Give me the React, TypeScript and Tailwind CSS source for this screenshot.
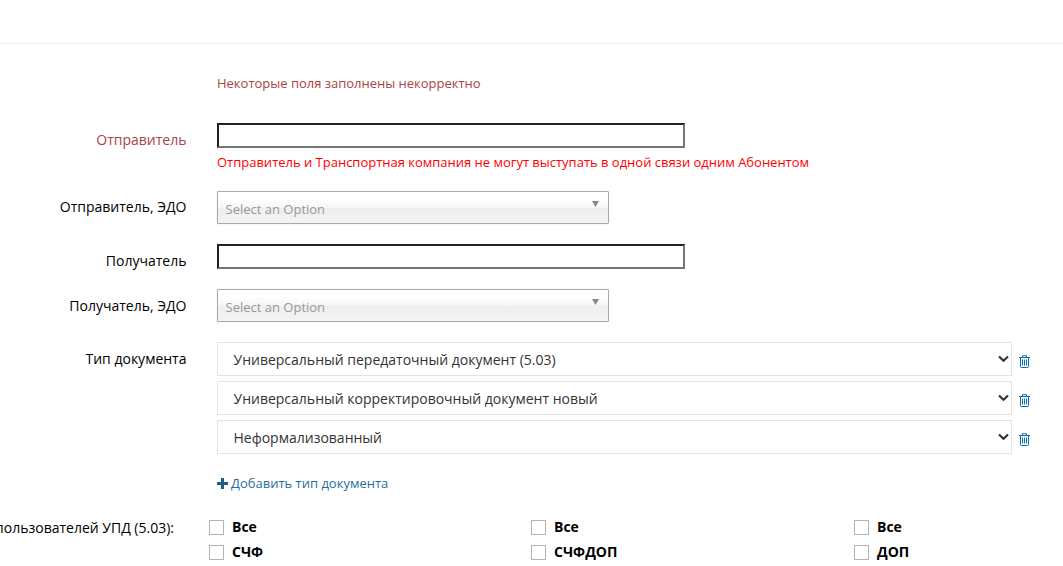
import React from "react";

const font = { fontFamily: '"Open Sans", "Noto Sans", sans-serif' };

function Label({ children, red }: { children: React.ReactNode; red?: boolean }) {
  return (
    <div className={`w-[186.5px] shrink-0 flex justify-end whitespace-nowrap text-[14px] leading-[20px] ${red ? "text-[#a94442]" : "text-black"}`}>
      {children}
    </div>
  );
}

function TextBox() {
  return <div className="w-[468px] h-[25px] border-2 border-t-[#222222] border-l-[#222222] border-r-[#767676] border-b-[#767676] bg-white" />;
}

function Chosen() {
  return (
    <div className="relative w-[392px] h-[33px] border border-[#aaaaaa] rounded-[1px] shadow-[0_0_2px_rgba(0,0,0,0.1)] bg-[linear-gradient(#ffffff_20%,#f6f6f6_50%,#eeeeee_52%,#f4f4f4_100%)] pl-[7.5px] pt-[8px] text-[13px] leading-[18px] text-[#999999]">
      Select an Option
      <svg className="absolute right-[9px] top-[9px]" width="7" height="6" viewBox="0 0 7 6"><path d="M0 0h7L3.5 6z" fill="#888888" /></svg>
    </div>
  );
}

function DocType({ value }: { value: string }) {
  return (
    <div className="flex items-center">
      <div className="relative w-[795px] h-[34px] border border-[#e3e3e3] flex items-center pl-[15.5px] text-[14px] text-[#333333] bg-white">
        {value}
        <svg className="absolute right-[2px] top-[12px]" width="11" height="8" viewBox="0 0 11 8"><path d="M1 1.5l4.5 4.2L10 1.5" fill="none" stroke="#333333" strokeWidth="2.2" /></svg>
      </div>
      <svg className="ml-[7px] mt-[5px]" width="11" height="13" viewBox="0 0 11 13" fill="none" stroke="#0f6cb0" strokeWidth="1">
        <path d="M0 2.5h11M3.5 2.5V0.7h4v1.8M1.5 2.5v9.2c0 .5.3.8.8.8h6.4c.5 0 .8-.3.8-.8V2.5" />
        <path d="M3.5 4.5v6M5.5 4.5v6M7.5 4.5v6" />
      </svg>
    </div>
  );
}

function Check({ text, width }: { text: string; width: string }) {
  return (
    <div className={`flex items-center h-[15px] ${width}`}>
      <div className="w-[15px] h-[15px] border border-[#b3b3b3] bg-white shrink-0" />
      <span className="ml-2 mb-[2px] font-bold text-[14px] leading-[15px] text-black">{text}</span>
    </div>
  );
}

export default function App() {
  return (
    <div className="w-[1063px] h-[566px] overflow-hidden bg-white" style={font}>
      <div className="h-[44px] border-b border-[#eeeeee]" />
      <div className="flex flex-col">
        <div className="pl-[217px] pt-[30px] text-[13px] leading-[18px] text-[#a94442] tracking-[-0.01px]">Некоторые поля заполнены некорректно</div>

        <div className="flex mt-[31px]">
          <div className="pt-[7px]"><Label red>Отправитель</Label></div>
          <div className="ml-[30.5px]">
            <TextBox />
            <div className="mt-[5px] text-[13px] leading-[18px] text-[#ff0000] whitespace-nowrap tracking-[-0.01px]">Отправитель и Транспортная компания не могут выступать в одной связи одним Абонентом</div>
          </div>
        </div>

        <div className="flex mt-[20px]">
          <div className="pt-[6px]"><Label>Отправитель, ЭДО</Label></div>
          <div className="ml-[30.5px]"><Chosen /></div>
        </div>

        <div className="flex mt-[20px]">
          <div className="pt-[7px]"><Label>Получатель</Label></div>
          <div className="ml-[30.5px]"><TextBox /></div>
        </div>

        <div className="flex mt-[18px]">
          <div className="pt-[7px]"><Label>Получатель, ЭДО</Label></div>
          <div className="ml-[30.5px]"><Chosen /></div>
        </div>

        <div className="flex mt-[20px]">
          <div className="pt-[7px]"><Label>Тип документа</Label></div>
          <div className="ml-[30.5px] flex flex-col gap-[5px]">
            <DocType value="Универсальный передаточный документ (5.03)" />
            <DocType value="Универсальный корректировочный документ новый" />
            <DocType value="Неформализованный" />
          </div>
        </div>

        <div className="pl-[217px] mt-[20px] flex items-center text-[13px] leading-[18px] text-[#1f6f9c]">
          <svg width="11" height="11" viewBox="0 0 11 11" className="mr-[3px]"><path d="M4 0h3v4h4v3H7v4H4V7H0V4h4z" fill="#1f5f86" /></svg>
          Добавить тип документа
        </div>

        <div className="flex mt-[28px]">
          <div className="w-[174px] shrink-0 flex justify-end whitespace-nowrap text-[14px] leading-[15px] text-black">Список пользователей УПД (5.03):</div>
          <div className="ml-[35px] flex flex-col gap-[10px]">
            <div className="flex">
              <Check text="Все" width="w-[322px]" />
              <Check text="Все" width="w-[323px]" />
              <Check text="Все" width="w-[150px]" />
            </div>
            <div className="flex">
              <Check text="СЧФ" width="w-[322px]" />
              <Check text="СЧФДОП" width="w-[323px]" />
              <Check text="ДОП" width="w-[150px]" />
            </div>
          </div>
        </div>
      </div>
    </div>
  );
}
